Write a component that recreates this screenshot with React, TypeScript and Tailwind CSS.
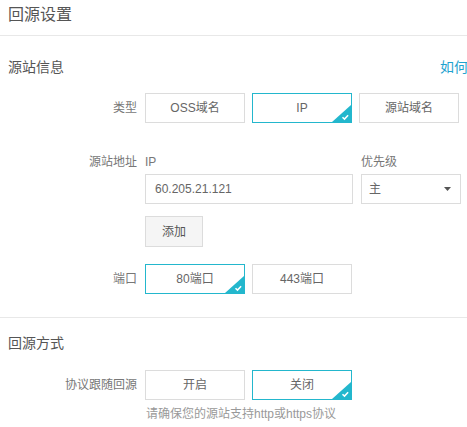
import React from "react";

const font = { fontFamily: '"Liberation Sans", "Noto Sans CJK SC", sans-serif' };

function Choice({ label, active }: { label: string; active?: boolean }) {
  return (
    <div
      className={`relative flex h-[30px] w-[100px] items-center justify-center border text-[12px] text-[#666] ${
        active ? "border-[#23b7cd]" : "border-[#dcdcdc]"
      }`}
    >
      {label}
      {active && (
        <svg className="absolute bottom-0 right-0" width="19" height="17" viewBox="0 0 19 17">
          <polygon points="19,0 19,17 0,17" fill="#23b7cd" />
          <path d="M10.5 12.2l2 1.9 3.6-3.9" fill="none" stroke="#fff" strokeWidth="1.5" />
        </svg>
      )}
    </div>
  );
}

function Row({ label, children, className = "" }: { label: string; children: React.ReactNode; className?: string }) {
  return (
    <div className={`flex items-center ${className}`}>
      <div className="w-[137px] shrink-0 text-right text-[12px] text-[#777]">{label}</div>
      <div className="ml-2 flex items-center gap-[7px]">{children}</div>
    </div>
  );
}

export default function App() {
  return (
    <div className="h-[427px] w-[467px] overflow-hidden bg-white" style={font}>
      {/* header */}
      <div className="border-b border-[#e8e8e8] px-2 pt-[4px] pb-[9px] text-[16px] leading-[22px] text-[#555]">
        回源设置
      </div>

      {/* 源站信息 */}
      <div className="grid w-[560px] grid-cols-[432px_1fr] px-2 pt-[21px] text-[14px] leading-[20px]">
        <span className="text-[#555]">源站信息</span>
        <span className="text-[#1fa3cf]">如何配置源站信息</span>
      </div>

      <Row label="类型" className="mt-[16px]">
        <Choice label="OSS域名" />
        <Choice label="IP" active />
        <Choice label="源站域名" />
      </Row>

      <div className="mt-[29px] flex text-[12px] leading-[20px] text-[#777]">
        <div className="w-[137px] text-right">源站地址</div>
        <div className="ml-2 w-[216px]">IP</div>
        <div>优先级</div>
      </div>
      <div className="ml-[145px] mt-[2px] flex gap-2">
        <div className="flex h-[30px] w-[208px] items-center border border-[#dcdcdc] pl-[9px] text-[12px] text-[#666]">
          60.205.21.121
        </div>
        <div className="flex h-[30px] w-[100px] items-center justify-between border border-[#dcdcdc] pl-[7px] pr-[9px] text-[12px] text-[#666]">
          主
          <svg width="7" height="4" viewBox="0 0 7 4">
            <polygon points="0,0 7,0 3.5,4" fill="#555" />
          </svg>
        </div>
      </div>
      <div className="ml-[145px] mt-[12px] flex h-[31px] w-[58px] items-center justify-center border border-[#dcdcdc] bg-[#f5f5f5] text-[12px] text-[#555]">
        添加
      </div>

      <Row label="端口" className="mt-[17px]">
        <Choice label="80端口" active />
        <Choice label="443端口" />
      </Row>

      <div className="mt-[23px] border-t border-[#e8e8e8]" />

      <div className="px-2 pt-[15px] text-[14px] leading-[20px] text-[#555]">回源方式</div>

      <Row label="协议跟随回源" className="mt-[17px]">
        <Choice label="开启" />
        <Choice label="关闭" active />
      </Row>
      <div className="ml-[146px] mt-[6px] text-[12px] leading-[16px] text-[#999]">请确保您的源站支持http或https协议</div>
    </div>
  );
}
